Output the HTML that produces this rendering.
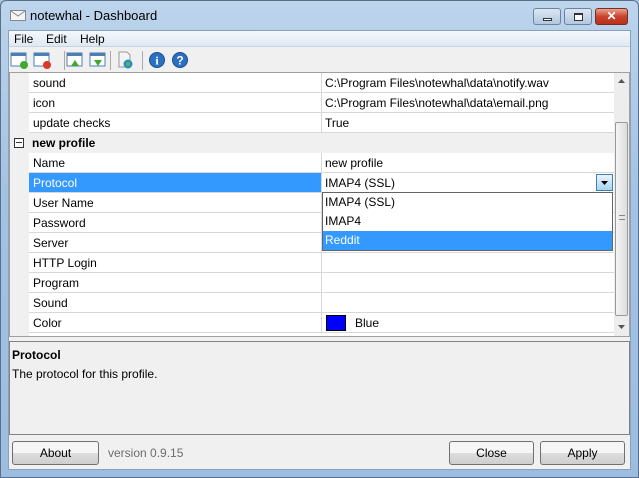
<!DOCTYPE html>
<html><head><style>
*{margin:0;padding:0;box-sizing:border-box}
body{width:639px;height:478px;overflow:hidden;background:#a9c6e3;font-family:"Liberation Sans",sans-serif;font-size:12px;color:#000;position:relative}
.frame{position:absolute;left:0;top:0;width:639px;height:478px;background:linear-gradient(#bcd4ec,#a4c2e2 40%,#9dbde0);border:1px solid #5a6f8a;border-radius:6px 6px 0 0}
.abs{position:absolute}
.client{position:absolute;left:8px;top:30px;width:623px;height:440px;background:#f0f0f0;border:1px solid #8aa0bc}
.menu{position:absolute;left:0;top:0;width:621px;height:16px;background:linear-gradient(#f5f8fc,#dfe8f3);border-bottom:1px solid #c8d3e0}
.menu span{position:absolute;top:1px;font-size:12px}
.tb{position:absolute;top:17px;left:0;width:621px;height:24px;background:#f0f0f0}
.grid{position:absolute;left:0;top:41px;width:621px;height:265px;background:#fff;border:1px solid #a0a0a0}
.row{position:absolute;left:19px;width:585px;height:20px;border-bottom:1px solid #d8d8d8;background:#fff}
.row .k{position:absolute;left:4px;top:3px}
.row .v{position:absolute;left:296px;top:3px}
.row .sep{position:absolute;left:292px;top:0;width:1px;height:20px;background:#d8d8d8}
.btn{position:absolute;height:24px;border:1px solid #707070;border-radius:3px;background:linear-gradient(#f6f6f6 50%,#dddddd 50%,#cfcfcf);text-align:center;line-height:22px;font-size:12px}
</style></head><body>
<div class="frame"></div>
<div class="abs" style="left:10px;top:10px;width:16px;height:11px;background:#f4f4f4;border:1px solid #888"></div>
<svg class="abs" style="left:10px;top:10px" width="16" height="11"><path d="M1 1 L8 6 L15 1" stroke="#888" fill="none"/></svg>
<div class="abs" style="left:30px;top:8px;font-size:13px">notewhal - Dashboard</div>
<div class="abs" style="left:533px;top:8px;width:28px;height:17px;border:1px solid #6d82a0;border-radius:3px;background:linear-gradient(#dbe6f3,#b3c7df)"><div class="abs" style="left:9px;top:9px;width:9px;height:3px;border:1px solid #333;background:#fff"></div></div>
<div class="abs" style="left:564px;top:8px;width:28px;height:17px;border:1px solid #6d82a0;border-radius:3px;background:linear-gradient(#dbe6f3,#b3c7df)"><div class="abs" style="left:9px;top:4px;width:9px;height:8px;border:1px solid #333;border-top-width:2px;background:#fff"></div></div>
<div class="abs" style="left:595px;top:8px;width:33px;height:17px;border:1px solid #7a2d22;border-radius:3px;background:linear-gradient(#e8a392,#c9432b 50%,#b8321c);color:#fff;font-weight:bold;text-align:center;font-size:12px;line-height:15px">✕</div>
<div class="client">
<div class="menu"><span style="left:5px">File</span><span style="left:37px">Edit</span><span style="left:71px">Help</span></div>
<div class="tb">
 <svg width="200" height="24">
  <g><rect x="2" y="5" width="15" height="13" fill="#fff" stroke="#4d7fb7"/><rect x="2" y="5" width="15" height="3" fill="#4d7fb7"/><circle cx="15" cy="17" r="4" fill="#3fa82f"/></g>
  <g transform="translate(23,0)"><rect x="2" y="5" width="15" height="13" fill="#fff" stroke="#4d7fb7"/><rect x="2" y="5" width="15" height="3" fill="#4d7fb7"/><circle cx="15" cy="17" r="4" fill="#d93a2b"/></g>
  <rect x="55" y="3" width="1" height="19" fill="#aaa"/>
  <g transform="translate(56,0)"><rect x="2" y="5" width="15" height="13" fill="#fff" stroke="#4d7fb7"/><rect x="2" y="5" width="15" height="3" fill="#4d7fb7"/><path d="M6 18 L10 12 L14 18Z" fill="#3fa82f"/></g>
  <g transform="translate(79,0)"><rect x="2" y="5" width="15" height="13" fill="#fff" stroke="#4d7fb7"/><rect x="2" y="5" width="15" height="3" fill="#4d7fb7"/><path d="M6 12 L10 18 L14 12Z" fill="#3fa82f"/></g>
  <rect x="101" y="3" width="1" height="19" fill="#aaa"/>
  <g transform="translate(108,0)"><path d="M2 4 H10 L13 7 V19 H2Z" fill="#f4f4f4" stroke="#999"/><circle cx="11" cy="16" r="4.5" fill="#2d8ccf"/><circle cx="11" cy="16" r="2" fill="#5cb83a"/></g>
  <rect x="133" y="3" width="1" height="19" fill="#aaa"/>
  <circle cx="148" cy="12" r="7.5" fill="#2a6fc0" stroke="#1b4f90"/><text x="148" y="16.5" font-size="12" font-weight="bold" fill="#fff" text-anchor="middle" font-family="Liberation Serif">i</text>
  <circle cx="171" cy="12" r="7.5" fill="#2a6fc0" stroke="#1b4f90"/><text x="171" y="16.5" font-size="12" font-weight="bold" fill="#fff" text-anchor="middle">?</text>
 </svg>
</div>
<div class="grid">
 <div class="abs" style="left:0;top:0;width:19px;height:263px;background:#f0f0f0"></div>
 <div class="row" style="top:0"><span class="k">sound</span><div class="sep"></div><span class="v">C:\Program Files\notewhal\data\notify.wav</span></div>
 <div class="row" style="top:20px"><span class="k">icon</span><div class="sep"></div><span class="v">C:\Program Files\notewhal\data\email.png</span></div>
 <div class="row" style="top:40px"><span class="k">update checks</span><div class="sep"></div><span class="v">True</span></div>
 <div class="row" style="top:60px;left:0;width:604px;background:#f0f0f0;border-bottom:none"><div class="abs" style="left:4px;top:5px;width:10px;height:10px;border:1px solid #333;background:#fff"><div class="abs" style="left:1px;top:3px;width:6px;height:1px;background:#333"></div></div><span class="abs" style="left:22px;top:3px;font-weight:bold">new profile</span></div>
 <div class="row" style="top:80px"><span class="k">Name</span><div class="sep"></div><span class="v">new profile</span></div>
 <div class="row" style="top:100px;background:#fff"><div class="abs" style="left:0;top:0;width:292px;height:19px;background:#3399ff"></div><span class="k" style="color:#fff">Protocol</span><div class="sep"></div><span class="v">IMAP4 (SSL)</span>
  <div class="abs" style="left:567px;top:1px;width:17px;height:17px;border:1px solid #3c7fb1;background:linear-gradient(#e8f4fc,#a9d5f2)"><svg width="15" height="15"><path d="M4 6 H11 L7.5 10Z" fill="#000"/></svg></div></div>
 <div class="row" style="top:120px"><span class="k">User Name</span><div class="sep"></div></div>
 <div class="row" style="top:140px"><span class="k">Password</span><div class="sep"></div></div>
 <div class="row" style="top:160px"><span class="k">Server</span><div class="sep"></div></div>
 <div class="row" style="top:180px"><span class="k">HTTP Login</span><div class="sep"></div></div>
 <div class="row" style="top:200px"><span class="k">Program</span><div class="sep"></div></div>
 <div class="row" style="top:220px"><span class="k">Sound</span><div class="sep"></div></div>
 <div class="row" style="top:240px"><span class="k">Color</span><div class="sep"></div><div class="abs" style="left:297px;top:2px;width:20px;height:16px;background:#0000ff;border:1px solid #000"></div><span class="v" style="left:326px">Blue</span></div>
 <div class="abs" style="left:312px;top:119px;width:291px;height:59px;border:1px solid #646464;background:#fff">
  <div class="abs" style="left:2px;top:2px">IMAP4 (SSL)</div>
  <div class="abs" style="left:2px;top:21px">IMAP4</div>
  <div class="abs" style="left:0;top:38px;width:289px;height:19px;background:#3399ff;color:#fff;padding:2px 2px">Reddit</div>
 </div>
 <div class="abs" style="left:604px;top:0;width:15px;height:263px;background:#ededed">
  <svg class="abs" style="left:3px;top:5px" width="9" height="6"><path d="M1 5 L4.5 1 L8 5Z" fill="#555"/></svg>
  <div class="abs" style="left:1px;top:49px;width:13px;height:194px;border:1px solid #999;border-radius:2px;background:linear-gradient(90deg,#f4f4f4,#dcdcdc)"><div class="abs" style="left:3px;top:92px;width:6px;height:5px;border-top:1px solid #888;border-bottom:1px solid #888"></div></div>
  <svg class="abs" style="left:3px;top:251px" width="9" height="6"><path d="M1 1 L4.5 5 L8 1Z" fill="#555"/></svg>
 </div>
</div>
<div class="abs" style="left:0;top:310px;width:621px;height:94px;border:1px solid #828282;background:#f0f0f0">
 <div class="abs" style="left:2px;top:6px;font-weight:bold">Protocol</div>
 <div class="abs" style="left:2px;top:25px">The protocol for this profile.</div>
</div>
<div class="btn" style="left:3px;top:410px;width:87px">About</div>
<div class="abs" style="left:99px;top:415px;color:#6d6d6d">version 0.9.15</div>
<div class="btn" style="left:440px;top:410px;width:85px">Close</div>
<div class="btn" style="left:531px;top:410px;width:85px">Apply</div>
</div>
</body></html>
